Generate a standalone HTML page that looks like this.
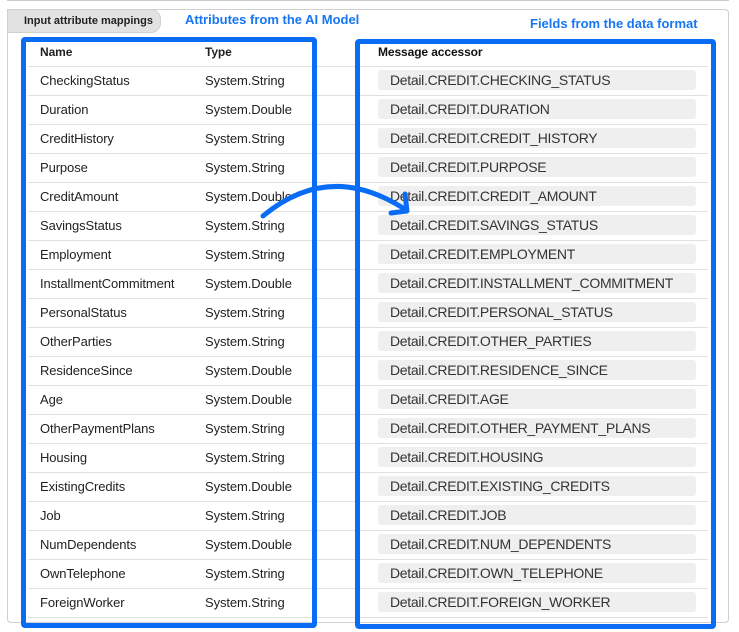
<!DOCTYPE html>
<html><head><style>
*{margin:0;padding:0;box-sizing:border-box}
body{width:739px;height:632px;background:#fff;position:relative;overflow:hidden;font-family:"Liberation Sans",Arial,sans-serif;color:#222}
.topline{position:absolute;left:7px;top:0;width:722px;height:1px;background:#ccc}
.panel{position:absolute;left:7px;top:9px;width:722px;height:614px;border:1px solid #cfcfcf;border-radius:4px}
.tab{position:absolute;left:7px;top:9px;width:154px;height:24px;background:#e2e2e2;border:1px solid #cfcfcf;border-top-right-radius:10px;border-bottom-right-radius:10px;font-size:11px;font-weight:bold;line-height:22px;padding-left:16px;color:#222}
.t{position:absolute;font-weight:bold;font-size:13px;color:#1676f3}
.line{position:absolute;left:28px;width:680px;height:1px;background:#e0e0e0}
.c{position:absolute;font-size:13px;line-height:16px;letter-spacing:-0.1px}
.h{font-weight:bold;font-size:12px}
.pill{position:absolute;left:378px;width:318px;height:20px;background:#efefef;border-radius:3px;font-size:14px;line-height:20px;padding-left:12px;color:#333;letter-spacing:-0.3px}
.box{position:absolute;border:5px solid #0a6cf5;border-radius:4px}
</style></head><body>
<div class="topline"></div>
<div class="panel"></div>
<div class="tab">Input attribute mappings</div>
<div class="t" style="left:185px;top:12px">Attributes from the AI Model</div>
<div class="t" style="left:530px;top:16px">Fields from the data format</div>
<div class="c h" style="left:40px;top:44px">Name</div>
<div class="c h" style="left:205px;top:44px">Type</div>
<div class="c" style="left:378px;top:44px;font-size:12px;color:#111;font-weight:bold;font-weight:600">Message accessor</div>
<div id="rows"></div>
<script>
var d=[["CheckingStatus","String","CHECKING_STATUS"],["Duration","Double","DURATION"],["CreditHistory","String","CREDIT_HISTORY"],["Purpose","String","PURPOSE"],["CreditAmount","Double","CREDIT_AMOUNT"],["SavingsStatus","String","SAVINGS_STATUS"],["Employment","String","EMPLOYMENT"],["InstallmentCommitment","Double","INSTALLMENT_COMMITMENT"],["PersonalStatus","String","PERSONAL_STATUS"],["OtherParties","String","OTHER_PARTIES"],["ResidenceSince","Double","RESIDENCE_SINCE"],["Age","Double","AGE"],["OtherPaymentPlans","String","OTHER_PAYMENT_PLANS"],["Housing","String","HOUSING"],["ExistingCredits","Double","EXISTING_CREDITS"],["Job","String","JOB"],["NumDependents","Double","NUM_DEPENDENTS"],["OwnTelephone","String","OWN_TELEPHONE"],["ForeignWorker","String","FOREIGN_WORKER"]];
var h="";
for(var i=0;i<d.length;i++){var y=80+29*i;
h+='<div class="line" style="top:'+(y-14)+'px"></div>';
h+='<div class="c" style="left:40px;top:'+(y-7)+'px">'+d[i][0]+'</div>';
h+='<div class="c" style="left:205px;top:'+(y-7)+'px">System.'+d[i][1]+'</div>';
h+='<div class="pill" style="top:'+(y-10)+'px">Detail.CREDIT.'+d[i][2]+'</div>';}
h+='<div class="line" style="top:617px"></div>';
document.getElementById("rows").innerHTML=h;
</script>
<div class="box" style="left:21px;top:37px;width:296px;height:591px"></div>
<div class="box" style="left:355px;top:39px;width:361px;height:590px"></div>
<svg style="position:absolute;left:0;top:0" width="739" height="632"><path d="M263 216 Q330 160 406 210" fill="none" stroke="#0a6cf5" stroke-width="5" stroke-linecap="round"/><path d="M405 194 L407 211 L391 213" fill="none" stroke="#0a6cf5" stroke-width="5" stroke-linecap="round" stroke-linejoin="round"/></svg>
</body></html>
